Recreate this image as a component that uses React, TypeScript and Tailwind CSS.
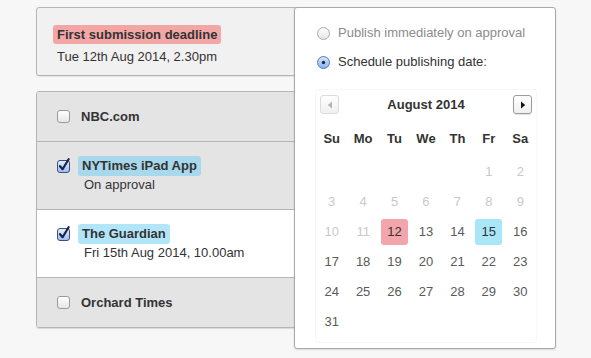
import React from "react";

const font = { fontFamily: '"Liberation Sans", Arial, Helvetica, sans-serif' };

function Checkbox({ checked }: { checked: boolean }) {
  if (!checked) {
    return (
      <svg width="13" height="13" viewBox="0 0 13 13" className="shrink-0">
        <defs>
          <linearGradient id="cbu" x1="0" y1="0" x2="0" y2="1">
            <stop offset="0" stopColor="#ffffff" />
            <stop offset="1" stopColor="#e6e6e6" />
          </linearGradient>
        </defs>
        <rect x="0.5" y="0.5" width="12" height="12" rx="2.5" fill="url(#cbu)" stroke="#9a9a9a" />
      </svg>
    );
  }
  return (
    <svg width="14" height="15" viewBox="0 0 14 15" className="shrink-0 -mt-[2px]">
      <defs>
        <linearGradient id="cbc" x1="0" y1="0" x2="0" y2="1">
          <stop offset="0" stopColor="#e4efff" />
          <stop offset="1" stopColor="#9cbcf0" />
        </linearGradient>
      </defs>
      <rect x="0.5" y="2.5" width="12" height="12" rx="2.5" fill="url(#cbc)" stroke="#3d4f82" />
      <path d="M3 8.2 L5.6 11.2 L11.6 1.2" fill="none" stroke="#1b2340" strokeWidth="2.2" strokeLinecap="round" strokeLinejoin="round" />
    </svg>
  );
}

function Radio({ checked }: { checked: boolean }) {
  return (
    <svg width="13" height="13" viewBox="0 0 13 13" className="shrink-0">
      <defs>
        <linearGradient id="ru" x1="0" y1="0" x2="0" y2="1">
          <stop offset="0" stopColor="#ffffff" />
          <stop offset="1" stopColor="#e4e4e4" />
        </linearGradient>
        <linearGradient id="rc" x1="0" y1="0" x2="0" y2="1">
          <stop offset="0" stopColor="#d8e8fc" />
          <stop offset="1" stopColor="#82b2ee" />
        </linearGradient>
      </defs>
      {checked ? (
        <>
          <circle cx="6.5" cy="6.5" r="6" fill="url(#rc)" stroke="#5b7db3" />
          <circle cx="6.5" cy="6.5" r="1.7" fill="#1c2a44" />
        </>
      ) : (
        <circle cx="6.5" cy="6.5" r="6" fill="url(#ru)" stroke="#ababab" />
      )}
    </svg>
  );
}

function Arrow({ dir, disabled }: { dir: "left" | "right"; disabled?: boolean }) {
  return (
    <div
      className={`w-[19px] h-[19px] rounded-[3px] border flex items-center justify-center bg-gradient-to-b from-white to-[#f0f0f0] ${
        disabled ? "border-[#dcdcdc]" : "border-[#9c9c9c] shadow-[0_1px_1px_rgba(0,0,0,0.12)]"
      }`}
    >
      <svg width="6" height="8" viewBox="0 0 6 8">
        {dir === "left" ? (
          <path d="M5 0.5 L0.8 4 L5 7.5 Z" fill={disabled ? "#b5b5b5" : "#111"} />
        ) : (
          <path d="M1 0.5 L5.2 4 L1 7.5 Z" fill={disabled ? "#b5b5b5" : "#111"} />
        )}
      </svg>
    </div>
  );
}

const weekdays = ["Su", "Mo", "Tu", "We", "Th", "Fr", "Sa"];

function Calendar() {
  const cells: (number | null)[] = [null, null, null, null, null];
  for (let d = 1; d <= 31; d++) cells.push(d);
  const rows: (number | null)[][] = [];
  for (let i = 0; i < cells.length; i += 7) rows.push(cells.slice(i, i + 7));

  return (
    <div className="ml-[20px] mt-[17px] w-[222px] border border-[#f7f7f7] rounded-[3px] pb-[5px]">
      <div className="flex items-center justify-between px-[4px] pt-[5px]">
        <Arrow dir="left" disabled />
        <div className="text-[13px] font-bold text-[#333]">August 2014</div>
        <Arrow dir="right" />
      </div>
      <div className="grid grid-cols-7 mt-[9px] h-[30px] items-center">
        {weekdays.map((w) => (
          <div key={w} className="text-center text-[13px] font-bold text-[#333]">
            {w}
          </div>
        ))}
      </div>
      <div className="mt-[3px]">
        {rows.map((r, i) => (
          <div key={i} className="grid grid-cols-7 h-[30px] items-center">
            {Array.from({ length: 7 }).map((_, j) => {
              const d = r[j];
              if (d == null) return <div key={j} />;
              const disabled = d < 12;
              let cls = "text-[#5a5a5a]";
              if (disabled) cls = "text-[#c9c9c9]";
              let bg = "";
              if (d === 12) {
                bg = "bg-[#f2a5ab]";
                cls = "text-[#333]";
              }
              if (d === 15) {
                bg = "bg-[#a8e6f8]";
                cls = "text-[#333]";
              }
              return (
                <div key={j} className="flex justify-center">
                  <div
                    className={`w-[27px] h-[26px] rounded-[3px] flex items-center justify-center text-[13px] ${cls} ${bg}`}
                  >
                    {d}
                  </div>
                </div>
              );
            })}
          </div>
        ))}
      </div>
    </div>
  );
}

function Row({
  checked,
  title,
  sub,
  bg,
  badge,
  last,
}: {
  checked: boolean;
  title: string;
  sub?: string;
  bg: string;
  badge?: string;
  last?: boolean;
}) {
  if (!sub) {
    return (
      <div
        className={`h-[49px] ${last ? "" : "h-[50px] border-b border-[#b5b5b5]"} ${bg} flex items-center pl-[20px] gap-[11px]`}
      >
        <Checkbox checked={checked} />
        <div className="text-[13px] font-bold text-[#333]">{title}</div>
      </div>
    );
  }
  return (
    <div className={`h-[68px] border-b border-[#b5b5b5] ${bg} pl-[20px] pt-[14px]`}>
      <div className="flex items-center gap-[7px]">
        <Checkbox checked={checked} />
        <div className={`h-[20px] leading-[20px] px-[4px] rounded-[3px] text-[13px] font-bold text-[#333] ${badge}`}>
          {title}
        </div>
      </div>
      <div className="pl-[27px] mt-[1px] text-[13px] leading-[16px] text-[#333]">{sub}</div>
    </div>
  );
}

export default function App() {
  return (
    <div className="relative w-[591px] h-[358px] bg-[#f7f7f7] overflow-hidden" style={font}>
      <div className="pl-[36px] pt-[7px] w-[330px]">
        <div className="h-[69px] border border-[#b5b5b5] rounded-[3px] bg-[#f1f1f1] pt-[14px] pl-[20px] shadow-[0_1px_1px_rgba(0,0,0,0.08)]">
          <div className="inline-block -ml-[4px] h-[19px] leading-[19px] px-[4px] rounded-[3px] bg-[#f3a6a6] text-[13px] font-bold text-[#333]">
            First submission deadline
          </div>
          <div className="mt-[2px] text-[13px] leading-[18px] text-[#333]">Tue 12th Aug 2014, 2.30pm</div>
        </div>
        <div className="mt-[15px] border border-[#b5b5b5] rounded-[3px] overflow-hidden shadow-[0_1px_1px_rgba(0,0,0,0.12)]">
          <Row checked={false} title="NBC.com" bg="bg-[#e4e4e4]" />
          <Row checked title="NYTimes iPad App" sub="On approval" bg="bg-[#e4e4e4]" badge="bg-[#a7d8ec]" />
          <Row checked title="The Guardian" sub="Fri 15th Aug 2014, 10.00am" bg="bg-white" badge="bg-[#b3e5f8]" />
          <Row checked={false} title="Orchard Times" bg="bg-[#e4e4e4]" last />
        </div>
      </div>

      <div className="absolute left-[294px] top-[7px] w-[262px] h-[342px] border border-[#a9a9a9] rounded-[3px] bg-white shadow-[0_1px_2px_rgba(0,0,0,0.12)]">
        <div className="pl-[22px] pt-[15px] flex flex-col gap-[9px]">
          <div className="flex items-center gap-[8px] h-[20px]">
            <Radio checked={false} />
            <span className="text-[13px] text-[#8c8c8c]">Publish immediately on approval</span>
          </div>
          <div className="flex items-center gap-[8px] h-[20px]">
            <Radio checked />
            <span className="text-[13px] text-[#333]">Schedule publishing date:</span>
          </div>
        </div>
        <Calendar />
      </div>
    </div>
  );
}
